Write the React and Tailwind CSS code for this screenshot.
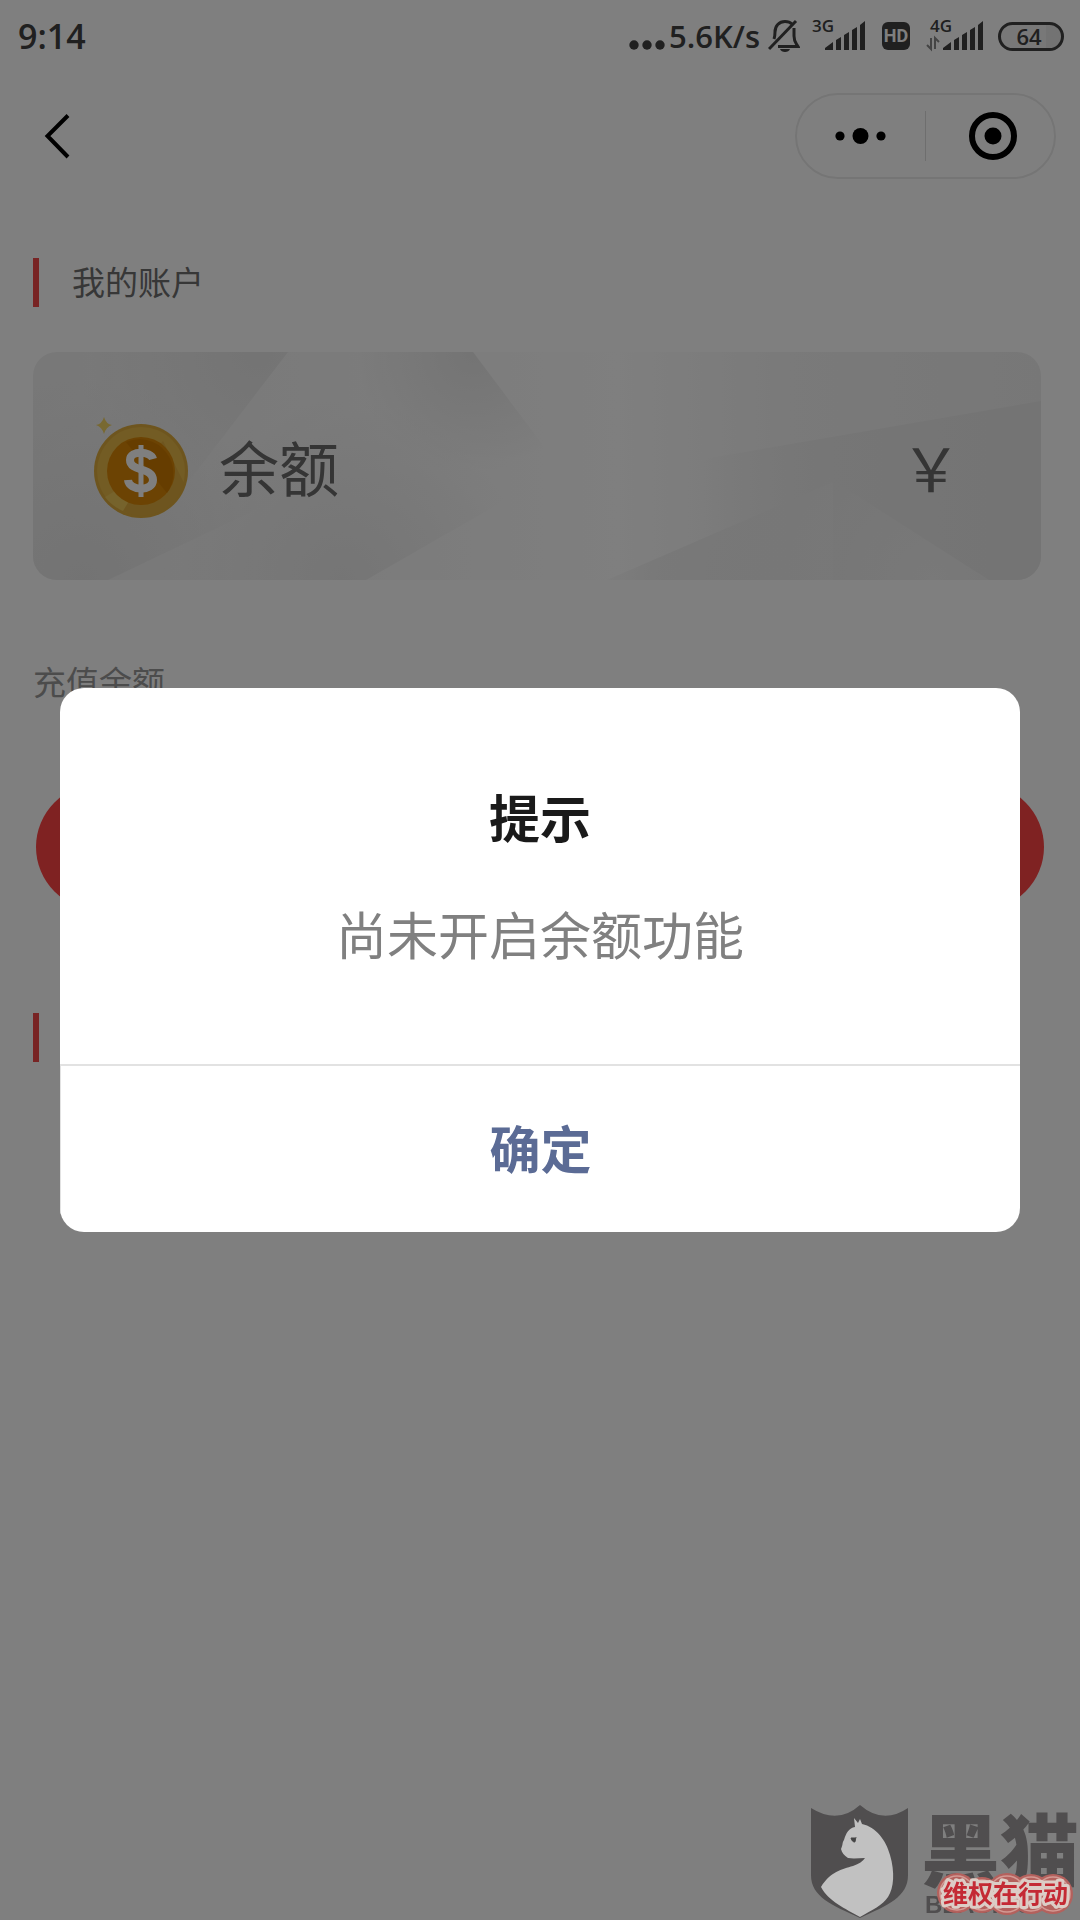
import { useState } from "react";

const SignalIcon = ({ label, transfer = false }) => (
  <svg className="h-9 w-[58px] overflow-visible" viewBox="0 0 58 36" fill="#404040" aria-hidden="true">
    <text x="4" y="14" fontSize="17" fontWeight="600" className="font-['Open_Sans',sans-serif]">
      {label}
    </text>
    {transfer && (
      <g stroke="#888" strokeWidth="2" fill="none">
        <path d="M5 20v11l-4-4M9 31V20l4 4" />
      </g>
    )}
    <path d="M17 32v-2l8-6v8zM28 22l5-3v13h-5zM36 17l5-3v18h-5zM44 12l5-3v23h-5zM52 7l5-4v29h-5z" />
  </svg>
);

const BellOffIcon = () => (
  <svg className="h-9 w-8" viewBox="0 0 32 36" fill="none" stroke="#404040" strokeWidth="3" aria-hidden="true">
    <path d="M6 21c1-3 1-4 1-7C7 8 11 3.500 17 3.500c3 0 5 .5 7 2.500" />
    <path d="M26 10v8c0 6 2 7 4 10.500H10" />
    <path d="M1 31L28 3" />
    <path d="M12 31h10c-1 4-9 4-10 0z" fill="#404040" stroke="none" />
  </svg>
);

const StatusBar = () => (
  <div className="flex h-[72px] items-center justify-between pl-[18px] pr-4 font-['Open_Sans',sans-serif] font-semibold text-[#404040]">
    <span className="text-[34px] leading-none">9:14</span>
    <div className="flex items-center">
      <svg className="h-9 w-9" viewBox="0 0 36 36" fill="#404040" aria-hidden="true">
        <circle cx="5" cy="27" r="4.700" />
        <circle cx="18" cy="27" r="4.700" />
        <circle cx="31" cy="27" r="4.700" />
      </svg>
      <span className="ml-1 text-[31px] leading-none">5.6K/s</span>
      <div className="ml-2 flex items-center">
        <BellOffIcon />
        <div className="ml-2">
          <SignalIcon label="3G" />
        </div>
        <span className="ml-4 flex h-7 w-7 items-center justify-center rounded-md bg-[#404040] font-['Roboto',sans-serif] text-[18px] font-bold leading-none text-white">
          HD
        </span>
        <div className="ml-4">
          <SignalIcon label="4G" transfer />
        </div>
        <span className="ml-[14px] flex h-[29px] w-[66px] items-center justify-center rounded-full border-3 border-[#404040] bg-linear-to-r from-[#f0f0f0] from-75% to-[#e6e6e6] to-75% pr-1 text-[22px] leading-none">
          64
        </span>
      </div>
    </div>
  </div>
);

const NavBar = ({ onBack }) => (
  <header className="flex items-center justify-between pl-9 pr-6 pt-[21px]">
    <button type="button" onClick={onBack} aria-label="返回" className="flex h-12 w-12 items-center">
      <svg className="h-12 w-10" viewBox="0 0 40 48" fill="none" stroke="#000" strokeWidth="4" aria-hidden="true">
        <path d="M32 3.500L11.500 24L32 45" />
      </svg>
    </button>
    <div className="flex h-[86px] w-[261px] items-center rounded-full border-2 border-[#ebebeb]">
      <button type="button" aria-label="更多" className="flex flex-1 justify-center">
        <svg className="h-5 w-[52px]" viewBox="0 0 52 20" aria-hidden="true">
          <circle cx="5" cy="10" r="4.600" />
          <circle cx="25.500" cy="10" r="8" />
          <circle cx="46" cy="10" r="4.600" />
        </svg>
      </button>
      <span className="h-[50px] w-px bg-[#dcdcdc]" />
      <button type="button" aria-label="关闭" className="flex flex-1 justify-center">
        <svg className="h-12 w-[54px]" viewBox="0 0 54 48" aria-hidden="true">
          <circle cx="30" cy="24" r="21" fill="none" stroke="#000" strokeWidth="6" />
          <circle cx="30" cy="24" r="8.500" />
        </svg>
      </button>
    </div>
  </header>
);

const SectionTitle = ({ children }) => (
  <h2 className="flex h-[49px] items-center border-l-6 border-[#f04848] pb-0.5 pl-[33px] text-[33px] leading-none text-[#6e6e6e]">
    {children}
  </h2>
);

const CoinIcon = () => (
  <svg className="h-[114px] w-24" viewBox="0 -8 96 114" aria-hidden="true">
    <path d="M11 0q2 7 8 8q-6 2-8 9q-2-7-8-9q6-1 8-8z" fill="#f0d264" />
    <circle cx="48" cy="54" r="47" fill="#dcaa3c" />
    <circle cx="48" cy="54" r="44" fill="#e6b848" />
    <path d="M17 85A44 44 0 0 0 91 66L70 24z" fill="#dcaa3e" />
    <path d="M12 80A44 44 0 0 0 30 94L36 84A34 34 0 0 1 22 74z" fill="#ecc658" />
    <circle cx="48" cy="54" r="34" fill="#d88606" />
    <path d="M33 25A34 34 0 0 1 74 76z" fill="#cc7a00" />
    <g fill="none" stroke="#fff">
      <path d="M60 42C58 34 37 33 37 43c0 12 23 7 23 20 0 12-24 11-25 0" strokeWidth="8" />
      <path d="M48 28v52" strokeWidth="5" />
    </g>
  </svg>
);

const CardPattern = () => (
  <svg className="absolute inset-0 h-full w-full" viewBox="0 0 1008 228" preserveAspectRatio="none" aria-hidden="true">
    <defs>
      <linearGradient id="base" x1="0" x2="1">
        <stop offset="0" stopColor="#f0f0f0" />
        <stop offset="0.4" stopColor="#f9f9f9" />
        <stop offset="0.58" stopColor="#fefefe" />
        <stop offset="0.75" stopColor="#f4f4f4" />
        <stop offset="1" stopColor="#efefef" />
      </linearGradient>
      <radialGradient id="topLeft" gradientUnits="userSpaceOnUse" cx="225" cy="0" r="180">
        <stop offset="0" stopColor="#e8e8e8" />
        <stop offset="1" stopColor="#e8e8e8" stopOpacity="0" />
      </radialGradient>
      <radialGradient id="topMid" gradientUnits="userSpaceOnUse" cx="440" cy="0" r="120">
        <stop offset="0" stopColor="#e8e8e8" />
        <stop offset="1" stopColor="#e8e8e8" stopOpacity="0" />
      </radialGradient>
      <radialGradient id="bottomLeft" gradientUnits="userSpaceOnUse" cx="50" cy="228" r="200">
        <stop offset="0" stopColor="#e7e7e7" />
        <stop offset="1" stopColor="#e7e7e7" stopOpacity="0" />
      </radialGradient>
      <radialGradient id="bottomMid" gradientUnits="userSpaceOnUse" cx="310" cy="228" r="180">
        <stop offset="0" stopColor="#ebebeb" />
        <stop offset="1" stopColor="#ebebeb" stopOpacity="0" />
      </radialGradient>
      <linearGradient id="right" gradientUnits="userSpaceOnUse" x1="660" x2="1008" y1="0" y2="0">
        <stop offset="0" stopColor="#ececec" stopOpacity="0" />
        <stop offset="0.4" stopColor="#ececec" />
        <stop offset="1" stopColor="#e8e8e8" />
      </linearGradient>
      <radialGradient id="bottomRight" gradientUnits="userSpaceOnUse" cx="740" cy="240" r="190">
        <stop offset="0" stopColor="#efefef" />
        <stop offset="0.6" stopColor="#efefef" stopOpacity="0.800" />
        <stop offset="1" stopColor="#efefef" stopOpacity="0" />
      </radialGradient>
      <radialGradient id="fold" gradientUnits="userSpaceOnUse" cx="900" cy="228" r="150">
        <stop offset="0" stopColor="#f2f2f2" />
        <stop offset="1" stopColor="#f2f2f2" stopOpacity="0" />
      </radialGradient>
    </defs>
    <rect width="1008" height="228" fill="url(#base)" />
    <path d="M0 0H255L140 150L0 180z" fill="url(#topLeft)" />
    <path d="M300 0H440L530 120H300z" fill="url(#topMid)" />
    <path d="M0 20H270V135L75 228H0z" fill="url(#bottomLeft)" />
    <path d="M100 228V40H530V115L333 228z" fill="url(#bottomMid)" />
    <path d="M1008 49L660 109V228H1008z" fill="url(#right)" />
    <path d="M574 228L800 130V228z" fill="url(#bottomRight)" />
    <path d="M740 90L956 228H740z" fill="url(#fold)" />
  </svg>
);

const BalanceCard = () => (
  <section className="relative mt-[45px] overflow-hidden rounded-3xl">
    <CardPattern />
    <div className="relative flex h-[228px] items-center justify-between pl-[60px] pr-20 text-[60px] leading-none text-[#6a6a6a]">
      <div className="flex items-center gap-[30px]">
        <CoinIcon />
        <span>余额</span>
      </div>
      <span>{"\uffe5"}</span>
    </div>
  </section>
);

const Watermark = () => (
  <svg
    className="pointer-events-none fixed bottom-0 right-0 h-[120px] w-[274px]"
    viewBox="0 0 274 120"
    role="img"
    aria-label="黑猫 BLACK CAT"
  >
    <path d="M5 8q27 17 49-3q23 20 48 3v67c0 22-20 30-48 43C26 105 5 97 5 75z" fill="#504e4f" />
    <path
      d="M48 18L52 23L54 19L56 24C70 27 80 40 84 55C89 72 88 88 82 97C77 105 66 110 54 117C40 109 22 101 15 87C24 72 36 69 47 66C53 64 57 61 59 58C53 58 48 59 42 58C38 55 36 53 35 49C37 45 36 43 38 40C40 33 43 28 49 27z"
      fill="#c1c1c1"
    />
    <path d="M45 38c1 3 2 4 4 4v-4zM50 37l-1 4" fill="#444" stroke="#444" />
    <text x="115" y="81" fontSize="79" fontWeight="900" fill="#504e4f" className="font-['Noto_Sans_CJK_SC',sans-serif]">
      黑猫
    </text>
    <text x="119" y="113" fontSize="24" fontWeight="700" fill="#504e4f" className="font-['Liberation_Sans',sans-serif]">
      BLACK CAT
    </text>
    <g fill="#b4615d">
      <circle cx="151" cy="93" r="20" />
      <circle cx="176" cy="95" r="18" />
      <circle cx="201" cy="94" r="21" />
      <circle cx="225" cy="94" r="20" />
      <circle cx="247" cy="94" r="20" />
    </g>
    <g fill="#b4615d" stroke="#d39a94" strokeWidth="1.500">
      <circle cx="151" cy="93" r="17" />
      <circle cx="176" cy="95" r="15" />
      <circle cx="201" cy="94" r="18" />
      <circle cx="225" cy="94" r="17" />
      <circle cx="247" cy="94" r="17" />
    </g>
    <text
      x="137"
      y="103"
      fontSize="25"
      fontWeight="700"
      fill="#c42a34"
      stroke="#dccdc6"
      strokeWidth="6"
      strokeLinejoin="round"
      paintOrder="stroke"
      className="font-['Noto_Sans_CJK_SC',sans-serif]"
    >
      维权在行动
    </text>
  </svg>
);

const AlertDialog = ({ title, message, onConfirm }) => (
  <div className="fixed inset-0 flex items-center justify-center bg-black/50">
    <div
      role="alertdialog"
      aria-labelledby="alert-title"
      aria-describedby="alert-message"
      className="w-8/9 overflow-hidden rounded-3xl bg-white text-center text-[51px] leading-[60px]"
    >
      <div className="px-12 pb-[101px] pt-[98px]">
        <h1 id="alert-title" className="font-bold text-[#1a1a1a]">
          {title}
        </h1>
        <p id="alert-message" className="mt-[57px] text-[#808080]">
          {message}
        </p>
      </div>
      <button
        type="button"
        onClick={onConfirm}
        className="block h-[168px] w-full border-l border-t-2 border-[#e2e2e2] pb-1 font-bold text-[#5b6b95]"
      >
        确定
      </button>
    </div>
  </div>
);

export const AccountPage = () => {
  const [alertOpen, setAlertOpen] = useState(true);

  return (
    <div className="min-h-screen bg-white font-['Noto_Sans_CJK_SC',sans-serif]">
      <StatusBar />
      <NavBar onBack={() => window.history.back()} />

      <main className="pl-[33px] pr-[39px] pt-[79px]">
        <SectionTitle>我的账户</SectionTitle>
        <BalanceCard />

        {/* Recharge */}
        <p className="mt-[85px] text-[33px] leading-[32px] text-[#999]">充值余额</p>
        <div className="-mr-[3px] pl-[3px] pt-[87px]">
          <button
            type="button"
            aria-label="充值"
            onClick={() => setAlertOpen(true)}
            className="block h-[126px] w-full rounded-full bg-[#ff4444]"
          />
        </div>

        <div className="mt-[103px]">
          <SectionTitle />
        </div>
      </main>

      {alertOpen && (
        <AlertDialog title="提示" message="尚未开启余额功能" onConfirm={() => setAlertOpen(false)} />
      )}
      <Watermark />
    </div>
  );
};

export default AccountPage;
